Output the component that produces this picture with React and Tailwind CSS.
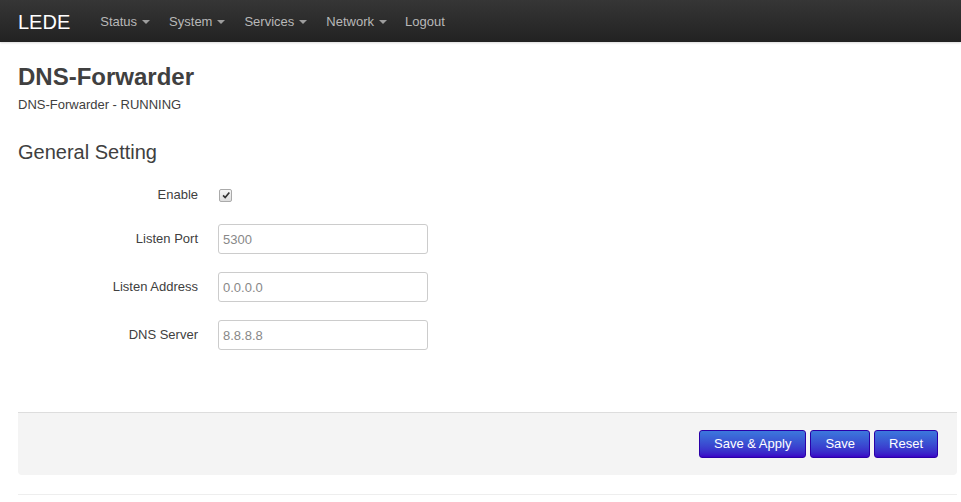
import React from "react";

const navItems = ["Status", "System", "Services", "Network"];

const fields = [
  { label: "Listen Port", value: "5300" },
  { label: "Listen Address", value: "0.0.0.0" },
  { label: "DNS Server", value: "8.8.8.8" },
];

const Caret = () => (
  <span className="ml-[5px] inline-block w-0 h-0 border-l-[4px] border-r-[4px] border-t-[4px] border-l-transparent border-r-transparent border-t-[#9d9d9d] align-middle" />
);

const ActionBtn = ({ children }) => (
  <button className="h-[28px] px-[14px] rounded-[3px] border border-[#2a00a8] bg-gradient-to-b from-[#3c78dc] to-[#3a00c6] text-white text-[13px]">
    {children}
  </button>
);

export default function App() {
  return (
    <div className="min-h-[502px] bg-white text-[13px] text-[#404040] font-['Liberation_Sans',Arial,sans-serif]">
      {/* Navbar */}
      <div className="h-[42px] bg-gradient-to-b from-[#363636] to-[#222] flex items-center pl-[18px] pt-[1px] shadow-[0_1px_2px_rgba(0,0,0,0.15)]">
        <span className="text-white text-[20px] mr-[30px]">LEDE</span>
        <div className="flex items-center gap-[19px] text-[13px] text-[#b8b8b8]">
          {navItems.map((n) => (
            <span key={n} className="flex items-center">
              {n}
              <Caret />
            </span>
          ))}
          <span className="-ml-[1px]">Logout</span>
        </div>
      </div>

      {/* Content */}
      <div className="pl-[18px] pr-[4px]">
        <h1 className="mt-[21px] text-[24px] font-bold leading-[28px] text-[#404040]">DNS-Forwarder</h1>
        <p className="mt-[6px] text-[13px] leading-[16px]">DNS-Forwarder - RUNNING</p>

        <h2 className="mt-[27px] text-[20px] leading-[24px]">General Setting</h2>

        <div className="mt-[16px] flex flex-col">
          <div className="flex items-center h-[30px]">
            <label className="w-[180px] text-right">Enable</label>
            <div className="ml-[21px] w-[13px] h-[13px] rounded-[2px] border border-[#aaa] bg-gradient-to-b from-[#f6f6f6] to-[#dedede] flex items-center justify-center">
              <svg viewBox="0 0 12 12" className="w-[10px] h-[10px]">
                <path d="M2.5 6.5 L5 9 L10 3" fill="none" stroke="#333" strokeWidth="2" />
              </svg>
            </div>
          </div>
          {fields.map((f, i) => (
            <div key={f.label} className={`flex items-center h-[30px] ${i === 0 ? "mt-[14px]" : "mt-[18px]"}`}>
              <label className="w-[180px] text-right">{f.label}</label>
              <input
                readOnly
                placeholder={f.value}
                className="ml-[20px] w-[210px] h-[30px] rounded-[3px] border border-[#ccc] px-[4px] text-[13px] placeholder:text-[#888] outline-none"
              />
            </div>
          ))}
        </div>

        {/* Actions */}
        <div className="mt-[62px] h-[63px] border-t border-[#ddd] bg-[#f4f4f4] rounded-b-[4px] flex items-start justify-end gap-[4px] pt-[17px] pr-[19px]">
          <ActionBtn>Save &amp; Apply</ActionBtn>
          <ActionBtn>Save</ActionBtn>
          <ActionBtn>Reset</ActionBtn>
        </div>
        <div className="mt-[19px] border-t border-[#eee]" />
      </div>
    </div>
  );
}
